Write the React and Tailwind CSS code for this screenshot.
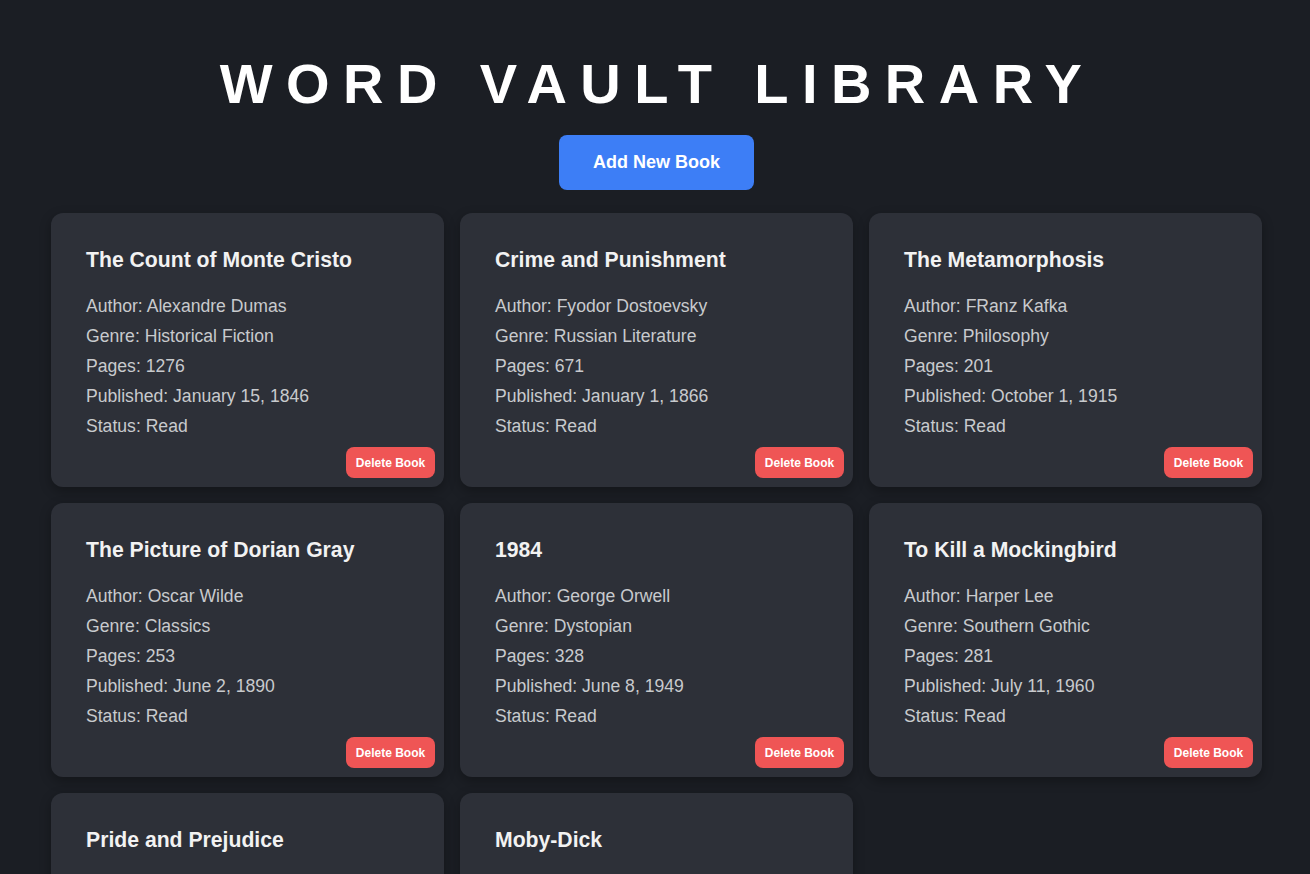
import React from 'react';

const books = [
  { title: 'The Count of Monte Cristo', author: 'Alexandre Dumas', genre: 'Historical Fiction', pages: 1276, published: 'January 15, 1846', status: 'Read' },
  { title: 'Crime and Punishment', author: 'Fyodor Dostoevsky', genre: 'Russian Literature', pages: 671, published: 'January 1, 1866', status: 'Read' },
  { title: 'The Metamorphosis', author: 'FRanz Kafka', genre: 'Philosophy', pages: 201, published: 'October 1, 1915', status: 'Read' },
  { title: 'The Picture of Dorian Gray', author: 'Oscar Wilde', genre: 'Classics', pages: 253, published: 'June 2, 1890', status: 'Read' },
  { title: '1984', author: 'George Orwell', genre: 'Dystopian', pages: 328, published: 'June 8, 1949', status: 'Read' },
  { title: 'To Kill a Mockingbird', author: 'Harper Lee', genre: 'Southern Gothic', pages: 281, published: 'July 11, 1960', status: 'Read' },
  { title: 'Pride and Prejudice', author: 'Jane Austen', genre: 'Romance', pages: 432, published: 'January 28, 1813', status: 'Read' },
  { title: 'Moby-Dick', author: 'Herman Melville', genre: 'Adventure', pages: 635, published: 'October 18, 1851', status: 'Read' },
];

const BookCard = ({ book }) => {
  return (
    <div className="relative h-[274px] rounded-xl bg-[#2d3038] pl-[35px] pr-[30px] pt-[34px] shadow-[0_4px_12px_rgba(0,0,0,0.3)]">
      <h2 className="text-[21.2px] font-bold leading-[26px] text-[#f2f2f2]">{book.title}</h2>
      <div className="mt-[19px] text-[17.6px] leading-[29.9px] text-[#c8cacd]">
        <p>Author: {book.author}</p>
        <p>Genre: {book.genre}</p>
        <p>Pages: {book.pages}</p>
        <p>Published: {book.published}</p>
        <p>Status: {book.status}</p>
      </div>
      <button className="absolute bottom-[9px] right-[9px] h-[31px] w-[89px] rounded-lg bg-[#ef5555] text-[12px] font-bold text-white">
        Delete Book
      </button>
    </div>
  );
};

export default function App() {
  return (
    <div className="min-h-screen bg-[#1b1e24] pt-[52px] pb-10 font-['Liberation_Sans',Arial,sans-serif]">
      <h1 className="pl-[5px] text-center text-[56px] font-bold leading-[64px] tracking-[0.24em] text-white">
        WORD VAULT LIBRARY
      </h1>
      <div className="mt-[19px] flex justify-center pl-[3px]">
        <button className="h-[55px] w-[195px] rounded-lg bg-[#3d7ef6] text-[18px] font-bold text-white">
          Add New Book
        </button>
      </div>
      <div className="ml-[51px] mt-[23px] grid w-[1211px] grid-cols-3 gap-4">
        {books.map((book) => (
          <BookCard key={book.title} book={book} />
        ))}
      </div>
    </div>
  );
}
